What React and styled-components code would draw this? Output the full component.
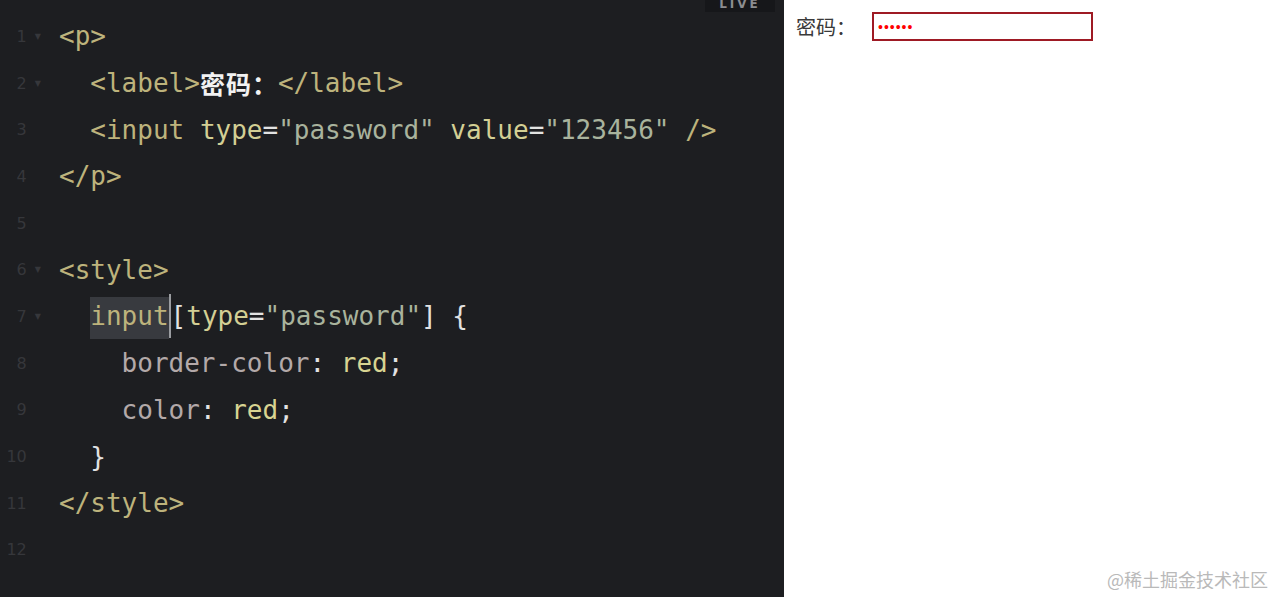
import React from "react"
import styled, { createGlobalStyle } from "styled-components"

const GlobalStyle = createGlobalStyle`
  html, body {
    margin: 0;
    padding: 0;
    background: #ffffff;
  }
  #root {
    height: 597px;
  }
`

const Page = styled.div`
  display: flex;
  width: 1275px;
  height: 597px;
  overflow: hidden;
  position: relative;
`

const Editor = styled.div`
  position: relative;
  width: 784px;
  flex: none;
  background: #1d1e21;
  padding-top: 13px;
  box-sizing: border-box;
`

const LiveBadge = styled.div`
  position: absolute;
  top: 0;
  left: 705px;
  width: 70px;
  height: 12px;
  background: #16171a;
  color: #8c8d90;
  font-family: "DejaVu Sans", sans-serif;
  font-weight: bold;
  font-size: 12px;
  letter-spacing: 3px;
  line-height: 8px;
  text-align: center;
  overflow: hidden;
`

const Line = styled.div`
  display: flex;
  align-items: center;
  height: 46.7px;
  font-family: "DejaVu Sans Mono", "Noto Sans CJK SC", monospace;
  font-size: 26px;
  white-space: pre;
`

const Gutter = styled.div`
  display: flex;
  align-items: center;
  width: 59px;
  flex: none;
  color: #36373b;
  font-family: "DejaVu Sans", sans-serif;
  font-size: 16px;
`

const Num = styled.span`
  width: 31px;
  text-align: right;
`

const Fold = styled.span`
  width: 28px;
  padding-left: 8px;
  font-size: 8px;
`

const Code = styled.div`
  display: flex;
  align-items: center;
  padding-left: ${p => p.$indent * 15.65}px;
`

const colors = {
  tag: "#bdb37c",
  attr: "#d3cf94",
  str: "#a9b39d",
  plain: "#e2e2e2",
  prop: "#b3a9a9",
  value: "#d8d492",
  cjk: "#f2f2f2",
}

const Tok = styled.span`
  color: ${p => colors[p.$k]};
  ${p => p.$k === "cjk" && "font-weight: bold; font-family: 'Noto Sans CJK SC', sans-serif; font-size: 25px; letter-spacing: 1px;"}
  ${p => p.$sel && "background: #383a3f; padding: 4px 0 8px; margin: -4px 0 -8px;"}
`

const Cursor = styled.span`
  display: inline-block;
  width: 2px;
  height: 44px;
  background: #9a9ca0;
`

const Preview = styled.div`
  flex: 1;
  display: flex;
  align-items: flex-start;
  padding: 12px 0 0 12px;
  background: #ffffff;
`

const Row = styled.div`
  display: flex;
  align-items: center;
  gap: 16px;
`

const Label = styled.label`
  font-family: "Noto Sans CJK SC", sans-serif;
  font-size: 20px;
  color: #3a3a3a;
`

const PassInput = styled.input`
  width: 221px;
  height: 29px;
  box-sizing: border-box;
  border: 2px solid #9e1a24;
  color: red;
  font-family: "Liberation Sans", sans-serif;
  font-size: 14px;
  letter-spacing: 1px;
  padding: 0 4px;
  outline: none;
  background: #fff;
`

const Watermark = styled.div`
  position: absolute;
  right: 7px;
  bottom: 5px;
  font-family: "Noto Sans CJK SC", sans-serif;
  font-size: 18px;
  color: #b9b9b9;
`

const lines = [
  { fold: true, indent: 0, toks: [["tag", "<p>"]] },
  { fold: true, indent: 2, toks: [["tag", "<label>"], ["cjk", "密码："], ["tag", "</label>"]] },
  {
    indent: 2,
    toks: [
      ["tag", "<input "], ["attr", "type"], ["plain", "="], ["str", "\"password\" "],
      ["attr", "value"], ["plain", "="], ["str", "\"123456\" "], ["tag", "/>"],
    ],
  },
  { indent: 0, toks: [["tag", "</p>"]] },
  { indent: 0, toks: [] },
  { fold: true, indent: 0, toks: [["tag", "<style>"]] },
  {
    fold: true,
    indent: 2,
    toks: [
      ["tag", "input", true], ["cursor"], ["plain", "["], ["attr", "type"], ["plain", "="],
      ["str", "\"password\""], ["plain", "] {"],
    ],
  },
  { indent: 4, toks: [["prop", "border-color"], ["plain", ": "], ["value", "red"], ["plain", ";"]] },
  { indent: 4, toks: [["prop", "color"], ["plain", ": "], ["value", "red"], ["plain", ";"]] },
  { indent: 2, toks: [["plain", "}"]] },
  { indent: 0, toks: [["tag", "</style>"]] },
  { indent: 0, toks: [] },
]

export default function App() {
  return (
    <Page>
      <GlobalStyle />
      <Editor>
        <LiveBadge>LIVE</LiveBadge>
        {lines.map((line, i) => (
          <Line key={i}>
            <Gutter>
              <Num>{i + 1}</Num>
              <Fold>{line.fold ? "▼" : ""}</Fold>
            </Gutter>
            <Code $indent={line.indent}>
              {line.toks.map((t, j) =>
                t[0] === "cursor" ? (
                  <Cursor key={j} />
                ) : (
                  <Tok key={j} $k={t[0]} $sel={t[2]}>
                    {t[1]}
                  </Tok>
                )
              )}
            </Code>
          </Line>
        ))}
      </Editor>
      <Preview>
        <Row>
          <Label>密码：</Label>
          <PassInput type="password" value="123456" readOnly />
        </Row>
      </Preview>
      <Watermark>@稀土掘金技术社区</Watermark>
    </Page>
  )
}
